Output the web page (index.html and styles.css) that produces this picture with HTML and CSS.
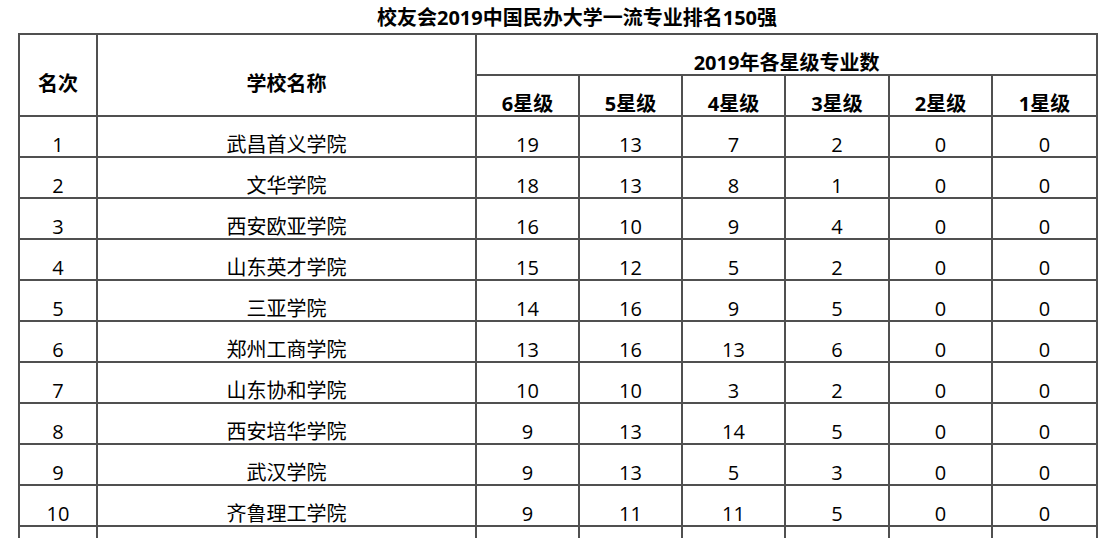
FILE: index.html
```html
<!DOCTYPE html>
<html lang="zh-CN">
<head>
<meta charset="utf-8">
<title>校友会2019中国民办大学一流专业排名150强</title>
<link rel="stylesheet" href="styles.css">
</head>
<body>
<div class="page">
  <h1 class="title">校友会2019中国民办大学一流专业排名150强</h1>
  <table class="rank">
    <colgroup>
      <col class="c-rank">
      <col class="c-name">
      <col class="c-star">
      <col class="c-star">
      <col class="c-star">
      <col class="c-star4">
      <col class="c-star">
      <col class="c-star6">
    </colgroup>
    <thead>
      <tr>
        <th rowspan="2">名次</th>
        <th rowspan="2">学校名称</th>
        <th colspan="6">2019年各星级专业数</th>
      </tr>
      <tr>
        <th>6星级</th><th>5星级</th><th>4星级</th><th>3星级</th><th>2星级</th><th>1星级</th>
      </tr>
    </thead>
    <tbody>
      <tr><td>1</td><td>武昌首义学院</td><td>19</td><td>13</td><td>7</td><td>2</td><td>0</td><td>0</td></tr>
      <tr><td>2</td><td>文华学院</td><td>18</td><td>13</td><td>8</td><td>1</td><td>0</td><td>0</td></tr>
      <tr><td>3</td><td>西安欧亚学院</td><td>16</td><td>10</td><td>9</td><td>4</td><td>0</td><td>0</td></tr>
      <tr><td>4</td><td>山东英才学院</td><td>15</td><td>12</td><td>5</td><td>2</td><td>0</td><td>0</td></tr>
      <tr><td>5</td><td>三亚学院</td><td>14</td><td>16</td><td>9</td><td>5</td><td>0</td><td>0</td></tr>
      <tr><td>6</td><td>郑州工商学院</td><td>13</td><td>16</td><td>13</td><td>6</td><td>0</td><td>0</td></tr>
      <tr><td>7</td><td>山东协和学院</td><td>10</td><td>10</td><td>3</td><td>2</td><td>0</td><td>0</td></tr>
      <tr><td>8</td><td>西安培华学院</td><td>9</td><td>13</td><td>14</td><td>5</td><td>0</td><td>0</td></tr>
      <tr><td>9</td><td>武汉学院</td><td>9</td><td>13</td><td>5</td><td>3</td><td>0</td><td>0</td></tr>
      <tr><td>10</td><td>齐鲁理工学院</td><td>9</td><td>11</td><td>11</td><td>5</td><td>0</td><td>0</td></tr>
      <tr><td></td><td></td><td></td><td></td><td></td><td></td><td></td><td></td></tr>
    </tbody>
  </table>
</div>
</body>
</html>
```
FILE: styles.css
```css
html, body {
  margin: 0;
  padding: 0;
  background: #ffffff;
}

body {
  font-family: "Open Sans", "Noto Sans CJK SC", sans-serif;
  color: #000000;
}

.page {
  padding: 0 0 0 18px;
}

.title {
  margin: 0;
  height: 33px;
  padding-left: 38px;
  box-sizing: border-box;
  width: 1080px;
  text-align: center;
  font-size: 20px;
  font-weight: 700;
  line-height: 33px;
  padding-top: 1px;
}

.rank {
  border-collapse: collapse;
  table-layout: fixed;
  width: 1080px;
}

.c-rank { width: 78px; }
.c-name { width: 379px; }
.c-star { width: 103px; }
.c-star4 { width: 104px; }
.c-star6 { width: 105px; }

.rank tr {
  height: 41px;
}

.rank th,
.rank td {
  border: 2px solid #505050;
  padding: 16px 0 0 0;
  text-align: center;
  vertical-align: middle;
  font-size: 20px;
  line-height: 23px;
  white-space: nowrap;
}

.rank th {
  font-weight: 700;
}

.rank td {
  font-weight: 400;
}
```
